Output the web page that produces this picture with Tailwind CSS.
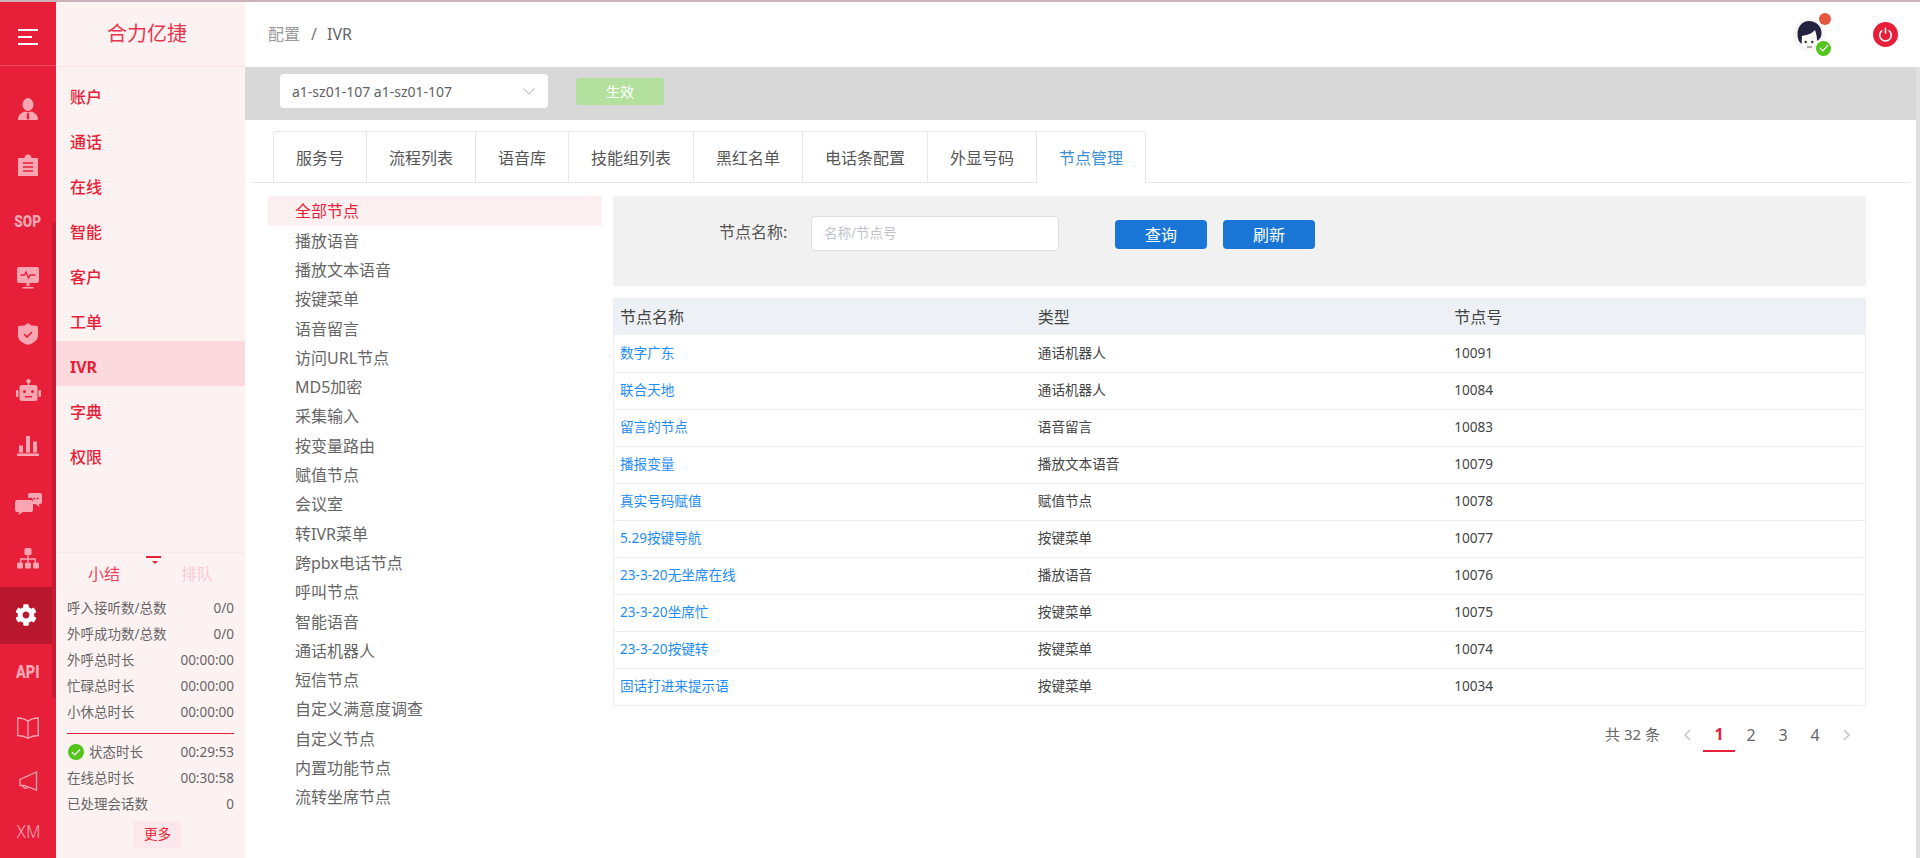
<!doctype html>
<html lang="zh-CN">
<head>
<meta charset="UTF-8" />
<title>IVR</title>
<script src="https://cdn.jsdelivr.net/npm/@tailwindcss/browser@4"></script>
</head>
<body class="h-screen w-screen overflow-hidden bg-white font-['Noto_Sans','Noto_Sans_CJK_SC',sans-serif] flex flex-col">
  <div class="h-[2px] shrink-0 bg-[#cdb2bb]"></div>
  <div class="flex flex-1 min-h-0">

    <!-- icon rail -->
    <div class="relative w-[56px] shrink-0 bg-[#e81f39] overflow-hidden text-[#f7a6b2]">
      <div class="flex h-[64px] items-center justify-center border-b border-[#ec4a5e] pt-[6px]">
        <svg width="20" height="16" viewBox="0 0 20 16" fill="none" stroke="#fff" stroke-width="2"><path d="M0 1h20M0 8h14M0 15h20"/></svg>
      </div>
      <div class="pt-[15px]">
        <div class="flex h-[56.2px] items-center justify-center">
          <svg width="20" height="22" viewBox="0 0 20 22"><ellipse cx="10" cy="6.500" rx="5.500" ry="6.500" fill="#f7a6b2"/><path d="M0 22c0-5 2.500-7 7-8.500l3 1 3-1c4.500 1.500 7 3.500 7 8.500z" fill="#f7a6b2"/><path d="M9.200 15h1.600l.6 5-1.400 2-1.400-2z" fill="#e81f39"/></svg>
        </div>
        <div class="flex h-[56.2px] items-center justify-center">
          <svg width="20" height="22" viewBox="0 0 20 22"><path d="M0 4h6.500a3.500 3.500 0 0 1 7 0H20v18H0z" fill="#f7a6b2"/><path d="M5 9h10M5 13h10M5 17h10" stroke="#e81f39" stroke-width="1.500"/></svg>
        </div>
        <div class="flex h-[56.2px] items-center justify-center">
          <span class="text-[17px] font-black leading-none font-['Roboto',sans-serif] scale-x-[.8]">SOP</span>
        </div>
        <div class="flex h-[56.2px] items-center justify-center">
          <svg width="22" height="22" viewBox="0 0 22 22"><rect x="0" y="0" width="22" height="16" rx="2" fill="#f7a6b2"/><path d="M9.500 16h3v3h-3zM5.500 20h11v1.500h-11z" fill="#f7a6b2"/><path d="M3.500 8h4l1.500-3 2.500 6 1.500-3h5.500" fill="none" stroke="#e81f39" stroke-width="1.300"/></svg>
        </div>
        <div class="flex h-[56.2px] items-center justify-center">
          <svg width="20" height="22" viewBox="0 0 20 22"><path d="M10 0l3.500 2.500L20 3v10c0 4-5 7.500-10 9C5 20.500 0 17 0 13V3l6.500-.5z" fill="#f7a6b2"/><path d="M6 11l3 3 5-5" fill="none" stroke="#e81f39" stroke-width="1.600"/></svg>
        </div>
        <div class="flex h-[56.2px] items-center justify-center">
          <svg width="25" height="22" viewBox="0 0 25 22"><circle cx="12.500" cy="2.200" r="2.200" fill="#f7a6b2"/><path d="M11.800 3h1.400v4h-1.400z" fill="#f7a6b2"/><rect x="3.500" y="6" width="18" height="16" rx="2.500" fill="#f7a6b2"/><rect x="0" y="11" width="2.500" height="7" rx="1" fill="#f7a6b2"/><rect x="22.500" y="11" width="2.500" height="7" rx="1" fill="#f7a6b2"/><circle cx="8.500" cy="12.500" r="1.500" fill="#e81f39"/><circle cx="16.500" cy="12.500" r="1.500" fill="#e81f39"/><path d="M9 17h7v1.500H9z" fill="#e81f39"/></svg>
        </div>
        <div class="flex h-[56.2px] items-center justify-center">
          <svg width="22" height="20" viewBox="0 0 22 20" fill="#f7a6b2"><rect x="2" y="9.500" width="4" height="7"/><rect x="9" y="0" width="4" height="16.500"/><rect x="16" y="5.500" width="4" height="11"/><rect x="0" y="17.500" width="22" height="2.500"/></svg>
        </div>
        <div class="flex h-[56.2px] items-center justify-center pt-[4px]">
          <svg width="27" height="22" viewBox="0 0 27 22"><path d="M2 7h14a2 2 0 0 1 2 2v8a2 2 0 0 1-2 2H8l-4.500 3 .5-3H2a2 2 0 0 1-2-2V9a2 2 0 0 1 2-2z" fill="#f7a6b2"/><path d="M14 0h11a2 2 0 0 1 2 2v7a2 2 0 0 1-2 2h-1l.5 3-4-3h-2.500V7a2 2 0 0 0-2-2h-3V2a2 2 0 0 1 2-2z" fill="#f7a6b2"/><circle cx="16" cy="5.500" r="1" fill="#e81f39"/><circle cx="19.300" cy="5.500" r="1" fill="#e81f39"/><circle cx="22.600" cy="5.500" r="1" fill="#e81f39"/></svg>
        </div>
        <div class="flex h-[56.2px] items-center justify-center">
          <svg width="22" height="21" viewBox="0 0 22 21" fill="#f7a6b2"><rect x="7.500" y="0" width="7" height="7" rx="1.500"/><rect x="0" y="14.500" width="6" height="6" rx="1.500"/><rect x="8" y="14.500" width="6" height="6" rx="1.500"/><rect x="16" y="14.500" width="6" height="6" rx="1.500"/><path d="M10.300 7h1.400v3.300H19v4.200h-1.400v-2.800h-5.900v2.800h-1.400v-2.800H4.400v2.800H3v-4.200h7.300z"/></svg>
        </div>
        <div class="flex h-[57px] w-[52px] items-center justify-center bg-[#b8172d]">
          <svg width="22" height="22" viewBox="0 0 512 512" fill="#fff"><path d="M487.400 315.700l-42.600-24.600c4.300-23.200 4.300-47 0-70.200l42.600-24.600c4.900-2.800 7.100-8.600 5.500-14-11.100-35.600-30-67.800-54.700-94.600-3.800-4.100-10-5.100-14.800-2.300L380.800 110c-17.900-15.400-38.500-27.300-60.800-35.100V25.800c0-5.600-3.900-10.500-9.400-11.700-36.700-8.200-74.300-7.800-109.200 0-5.500 1.200-9.400 6.100-9.400 11.700V75c-22.200 7.900-42.800 19.800-60.800 35.100L88.700 85.500c-4.900-2.800-11-1.900-14.800 2.300-24.700 26.700-43.600 58.900-54.700 94.600-1.700 5.400.6 11.200 5.500 14L67.300 221c-4.300 23.200-4.300 47 0 70.200l-42.600 24.600c-4.900 2.800-7.100 8.600-5.500 14 11.100 35.600 30 67.800 54.700 94.600 3.800 4.100 10 5.100 14.800 2.300l42.600-24.600c17.900 15.400 38.500 27.300 60.800 35.100v49.200c0 5.600 3.900 10.500 9.400 11.700 36.700 8.200 74.300 7.800 109.200 0 5.500-1.200 9.400-6.100 9.400-11.700v-49.200c22.200-7.900 42.800-19.800 60.800-35.100l42.600 24.600c4.900 2.800 11 1.900 14.800-2.300 24.700-26.700 43.600-58.900 54.700-94.600 1.500-5.500-.7-11.300-5.600-14.100zM256 336c-44.100 0-80-35.900-80-80s35.900-80 80-80 80 35.900 80 80-35.900 80-80 80z"/></svg>
        </div>
        <div class="flex h-[56px] items-center justify-center">
          <span class="text-[18px] font-black leading-none font-['Roboto',sans-serif] scale-x-[.8]">API</span>
        </div>
        <div class="flex h-[56px] items-center justify-center">
          <svg width="22" height="22" viewBox="0 0 22 22" fill="none" stroke="#f7a6b2" stroke-width="1.300"><path d="M11 4.500C8.500 2 4 1 .7 1v17.500c3.500 0 7.500 1 10.300 2.800 2.800-1.800 6.800-2.800 10.300-2.800V1C18 1 13.500 2 11 4.500zM11 4.500v16.800"/></svg>
        </div>
        <div class="flex h-[50px] items-center justify-center">
          <svg width="19" height="20" viewBox="0 0 19 20" fill="none" stroke="#f7a6b2" stroke-width="1.300"><path d="M17.500 1v18L5 14.500H1v-6zM4.500 14.500a2 2 0 0 0 4 1.300"/></svg>
        </div>
        <div class="flex h-[52px] items-center justify-center">
          <span class="text-[18px] leading-none font-['Roboto',sans-serif] font-light scale-x-[.9]">XM</span>
        </div>
      </div>
      <!-- rail scrollbar -->
      <div class="absolute right-0 top-[221px] h-[475px] w-[4px] bg-[#c81c34]"></div>
    </div>

    <!-- sub menu -->
    <div class="flex w-[189px] shrink-0 flex-col bg-[#fdf2f2]">
      <div class="flex h-[65px] shrink-0 items-center justify-center border-b border-[#fbe4e6] pr-[7px] text-[20px] text-[#e8354d]">合力亿捷</div>
      <div class="flex-1 pt-[4px] text-[16px] font-medium text-[#e81f39]">
        <div class="flex h-[45px] items-center pl-[14px] pt-[6px]">账户</div>
        <div class="flex h-[45px] items-center pl-[14px] pt-[6px]">通话</div>
        <div class="flex h-[45px] items-center pl-[14px] pt-[6px]">在线</div>
        <div class="flex h-[45px] items-center pl-[14px] pt-[6px]">智能</div>
        <div class="flex h-[45px] items-center pl-[14px] pt-[6px]">客户</div>
        <div class="flex h-[45px] items-center pl-[14px] pt-[6px]">工单</div>
        <div class="flex h-[45px] items-center bg-[#fbd9dd] pl-[14px] pt-[6px] font-bold">IVR</div>
        <div class="flex h-[45px] items-center pl-[14px] pt-[6px]">字典</div>
        <div class="flex h-[45px] items-center pl-[14px] pt-[6px]">权限</div>
      </div>
      <div class="relative h-[306px] shrink-0 border-t border-[#fbe8ea] pl-[11px] pr-[11px] text-[13.5px] text-[#666]">
        <div class="absolute left-[90px] top-[3px] h-[2px] w-[15px] bg-[#e81f39]"></div>
        <div class="absolute left-[96px] top-[8px] h-0 w-0 border-x-[3px] border-t-[3px] border-x-transparent border-t-[#e81f39]"></div>
        <div class="flex h-[42px] items-center text-[16px]">
          <span class="w-[100px] pl-[21px] text-[#ee4560]">小结</span>
          <span class="pl-[14px] text-[#fbcbd2]">排队</span>
        </div>
        <div class="flex h-[26px] items-center justify-between"><span>呼入接听数/总数</span><span>0/0</span></div>
        <div class="flex h-[26px] items-center justify-between"><span>外呼成功数/总数</span><span>0/0</span></div>
        <div class="flex h-[26px] items-center justify-between"><span>外呼总时长</span><span>00:00:00</span></div>
        <div class="flex h-[26px] items-center justify-between"><span>忙碌总时长</span><span>00:00:00</span></div>
        <div class="flex h-[26px] items-center justify-between"><span>小休总时长</span><span>00:00:00</span></div>
        <div class="mt-[8px] h-px bg-[#e81f39]"></div>
        <div class="mt-[5px] flex h-[26px] items-center justify-between">
          <span class="flex items-center gap-[5px]">
            <svg class="ml-px" width="16" height="16" viewBox="0 0 16 16"><circle cx="8" cy="8" r="8" fill="#52c41a"/><path d="M4 8.200l2.800 2.600L12 5.500" fill="none" stroke="#fff" stroke-width="1.200"/></svg>
            状态时长
          </span>
          <span>00:29:53</span>
        </div>
        <div class="flex h-[26px] items-center justify-between"><span>在线总时长</span><span>00:30:58</span></div>
        <div class="flex h-[26px] items-center justify-between"><span>已处理会话数</span><span>0</span></div>
        <div class="ml-[66px] mt-[4px] flex h-[27px] w-[49px] items-center justify-center rounded bg-[#fce8eb] text-[#e81f39]">更多</div>
      </div>
    </div>

    <!-- main -->
    <div class="flex min-w-0 flex-1 flex-col">
      <div class="flex h-[65px] shrink-0 items-center pl-[23px] text-[16px] text-[#666]">
        <div class="mb-[2px] flex items-center">
          <span class="text-[#999]">配置</span>
          <span class="ml-[11px] mr-[10px] text-[#777]">/</span>
          <span>IVR</span>
        </div>
        <div class="relative ml-auto mr-[22px] flex items-center gap-[48px]">
          <div class="relative h-[32px] w-[32px] rounded-full bg-[#f5f5f5]">
            <svg width="32" height="32" viewBox="0 0 32 32"><ellipse cx="16" cy="21" rx="8" ry="9.500" fill="#fafafa"/><path d="M16 2C9 2 4.500 8 4.500 15c0 5 1.500 8 4 10l.5-8c4-1 10-2 13-6 1 3 2 6 2 11 3-2 4.500-4 4.500-8C28.500 7 23 2 16 2z" fill="#23233f"/><circle cx="12.700" cy="23" r="1.200" fill="#333"/><circle cx="19.300" cy="23" r="1.200" fill="#333"/><path d="M14 28h5" stroke="#777" stroke-width="1.200"/></svg>
            <span class="absolute right-[-6px] top-[-6px] h-[12px] w-[12px] rounded-full bg-[#e5563f]"></span>
            <span class="absolute bottom-[-5px] right-[-6px] flex h-[15px] w-[15px] items-center justify-center rounded-full bg-[#52c41a]">
              <svg width="10" height="8" viewBox="0 0 10 8" fill="none" stroke="#fff" stroke-width="1.200"><path d="M1 4l2.800 2.800L9 1"/></svg>
            </span>
          </div>
          <div class="flex h-[25px] w-[25px] items-center justify-center rounded-full bg-[#e81f39]">
            <svg width="15" height="15" viewBox="0 0 15 15" fill="none" stroke="#fff" stroke-width="1.600"><path d="M4.300 3.300a5.800 5.800 0 1 0 6.400 0M7.500 .8v6"/></svg>
          </div>
        </div>
      </div>

      <div class="flex min-h-0 flex-1">
        <div class="flex min-w-0 flex-1 flex-col">
          <div class="flex h-[53px] shrink-0 items-center bg-[#d8d8d8] pb-[5px] pl-[35px]">
            <div class="flex h-[34px] w-[268px] items-center justify-between rounded bg-white pl-[12px] pr-[13px] text-[14px] text-[#606266]">
              <span>a1-sz01-107 a1-sz01-107</span>
              <svg width="12" height="7" viewBox="0 0 12 7" fill="none" stroke="#c0c4cc" stroke-width="1.100"><path d="M.5 .5L6 6l5.500-5.500"/></svg>
            </div>
            <div class="ml-[28px] flex h-[27px] w-[88px] items-center justify-center rounded bg-[#b3e19d] text-[14px] text-white">生效</div>
          </div>

          <div class="mx-[6px] mt-[11px] flex h-[52px] shrink-0 border-b border-[#e4e7ed] pl-[22px] text-[16px] text-[#555]">
            <div class="flex h-[52px] overflow-hidden rounded-t border-x border-t border-[#e4e7ed]">
              <div class="flex h-[51px] items-center border-r border-[#e4e7ed] px-[22px]">服务号</div>
              <div class="flex h-[51px] items-center border-r border-[#e4e7ed] px-[22px]">流程列表</div>
              <div class="flex h-[51px] items-center border-r border-[#e4e7ed] px-[22px]">语音库</div>
              <div class="flex h-[51px] items-center border-r border-[#e4e7ed] px-[22px]">技能组列表</div>
              <div class="flex h-[51px] items-center border-r border-[#e4e7ed] px-[22px]">黑红名单</div>
              <div class="flex h-[51px] items-center border-r border-[#e4e7ed] px-[22px]">电话条配置</div>
              <div class="flex h-[51px] items-center border-r border-[#e4e7ed] px-[22px]">外显号码</div>
              <div class="flex h-[52px] items-center bg-white px-[22px] text-[#3d8fd1]">节点管理</div>
            </div>
          </div>

          <div class="mt-[13px] flex flex-1 pl-[23px] pr-[50px]">
            <div class="w-[334px] shrink-0 text-[16px] text-[#666]">
              <div class="flex h-[30px] items-center bg-[#fdf0f1] pl-[27px] text-[#e81f39]">全部节点</div>
              <div class="flex h-[29.3px] items-center pl-[27px]">播放语音</div>
              <div class="flex h-[29.3px] items-center pl-[27px]">播放文本语音</div>
              <div class="flex h-[29.3px] items-center pl-[27px]">按键菜单</div>
              <div class="flex h-[29.3px] items-center pl-[27px]">语音留言</div>
              <div class="flex h-[29.3px] items-center pl-[27px]">访问URL节点</div>
              <div class="flex h-[29.3px] items-center pl-[27px]">MD5加密</div>
              <div class="flex h-[29.3px] items-center pl-[27px]">采集输入</div>
              <div class="flex h-[29.3px] items-center pl-[27px]">按变量路由</div>
              <div class="flex h-[29.3px] items-center pl-[27px]">赋值节点</div>
              <div class="flex h-[29.3px] items-center pl-[27px]">会议室</div>
              <div class="flex h-[29.3px] items-center pl-[27px]">转IVR菜单</div>
              <div class="flex h-[29.3px] items-center pl-[27px]">跨pbx电话节点</div>
              <div class="flex h-[29.3px] items-center pl-[27px]">呼叫节点</div>
              <div class="flex h-[29.3px] items-center pl-[27px]">智能语音</div>
              <div class="flex h-[29.3px] items-center pl-[27px]">通话机器人</div>
              <div class="flex h-[29.3px] items-center pl-[27px]">短信节点</div>
              <div class="flex h-[29.3px] items-center pl-[27px]">自定义满意度调查</div>
              <div class="flex h-[29.3px] items-center pl-[27px]">自定义节点</div>
              <div class="flex h-[29.3px] items-center pl-[27px]">内置功能节点</div>
              <div class="flex h-[29.3px] items-center pl-[27px]">流转坐席节点</div>
            </div>

            <div class="ml-[11px] min-w-0 flex-1">
              <div class="flex h-[90px] items-start bg-[#f1f1f1] pt-[20px] pl-[106px]">
                <span class="w-[92px] text-[16px] leading-[32px] text-[#555]">节点名称:</span>
                <div class="flex h-[35px] w-[248px] items-center rounded border border-[#dcdfe6] bg-white pl-[12px] text-[13.5px] text-[#c0c4cc]">名称/节点号</div>
                <div class="ml-[56px] mt-[4px] flex h-[29px] w-[92px] items-center justify-center rounded bg-[#1976d7] text-[16px] text-white">查询</div>
                <div class="ml-[16px] mt-[4px] flex h-[29px] w-[92px] items-center justify-center rounded bg-[#1976d7] text-[16px] text-white">刷新</div>
              </div>

              <table class="mt-[12px] w-full table-fixed border-x border-[#ebeef5] text-[13.6px] text-[#444]">
                <thead>
                  <tr class="h-[37px] bg-[#edf1f5] text-left text-[16px] text-[#444]">
                    <th class="px-[6px] font-normal">节点名称</th><th class="pl-[7px] font-normal">类型</th><th class="px-[6px] font-normal">节点号</th>
                  </tr>
                </thead>
                <tbody>
                  <tr class="h-[37px] border-b border-[#ebeef5]"><td class="px-[6px] text-[#1f8cf5]">数字广东</td><td class="pl-[7px]">通话机器人</td><td class="px-[6px]">10091</td></tr>
                  <tr class="h-[37px] border-b border-[#ebeef5]"><td class="px-[6px] text-[#1f8cf5]">联合天地</td><td class="pl-[7px]">通话机器人</td><td class="px-[6px]">10084</td></tr>
                  <tr class="h-[37px] border-b border-[#ebeef5]"><td class="px-[6px] text-[#1f8cf5]">留言的节点</td><td class="pl-[7px]">语音留言</td><td class="px-[6px]">10083</td></tr>
                  <tr class="h-[37px] border-b border-[#ebeef5]"><td class="px-[6px] text-[#1f8cf5]">播报变量</td><td class="pl-[7px]">播放文本语音</td><td class="px-[6px]">10079</td></tr>
                  <tr class="h-[37px] border-b border-[#ebeef5]"><td class="px-[6px] text-[#1f8cf5]">真实号码赋值</td><td class="pl-[7px]">赋值节点</td><td class="px-[6px]">10078</td></tr>
                  <tr class="h-[37px] border-b border-[#ebeef5]"><td class="px-[6px] text-[#1f8cf5]">5.29按键导航</td><td class="pl-[7px]">按键菜单</td><td class="px-[6px]">10077</td></tr>
                  <tr class="h-[37px] border-b border-[#ebeef5]"><td class="px-[6px] text-[#1f8cf5]">23-3-20无坐席在线</td><td class="pl-[7px]">播放语音</td><td class="px-[6px]">10076</td></tr>
                  <tr class="h-[37px] border-b border-[#ebeef5]"><td class="px-[6px] text-[#1f8cf5]">23-3-20坐席忙</td><td class="pl-[7px]">按键菜单</td><td class="px-[6px]">10075</td></tr>
                  <tr class="h-[37px] border-b border-[#ebeef5]"><td class="px-[6px] text-[#1f8cf5]">23-3-20按键转</td><td class="pl-[7px]">按键菜单</td><td class="px-[6px]">10074</td></tr>
                  <tr class="h-[37px] border-b border-[#ebeef5]"><td class="px-[6px] text-[#1f8cf5]">固话打进来提示语</td><td class="pl-[7px]">按键菜单</td><td class="px-[6px]">10034</td></tr>
                </tbody>
              </table>

              <div class="mt-[12px] flex h-[34px] items-center justify-end pr-[3px] text-[16px] text-[#666]">
                <span class="mr-[11px] text-[15px]">共 32 条</span>
                <span class="flex h-[34px] w-[32px] items-center justify-center"><svg width="8" height="12" viewBox="0 0 8 12" fill="none" stroke="#c0c4cc" stroke-width="1.500"><path d="M7 1L2 6l5 5"/></svg></span>
                <span class="flex h-[34px] w-[32px] items-center justify-center border-b-2 border-[#e81f39] font-bold text-[#e81f39]">1</span>
                <span class="flex h-[34px] w-[32px] items-center justify-center">2</span>
                <span class="flex h-[34px] w-[32px] items-center justify-center">3</span>
                <span class="flex h-[34px] w-[32px] items-center justify-center">4</span>
                <span class="flex h-[34px] w-[32px] items-center justify-center"><svg width="8" height="12" viewBox="0 0 8 12" fill="none" stroke="#c0c4cc" stroke-width="1.500"><path d="M1 1l5 5-5 5"/></svg></span>
              </div>
            </div>
          </div>
        </div>
        <!-- page scrollbar -->
        <div class="w-[4px] shrink-0 bg-[#e0e0e0]"></div>
      </div>
    </div>
  </div>
</body>
</html>
